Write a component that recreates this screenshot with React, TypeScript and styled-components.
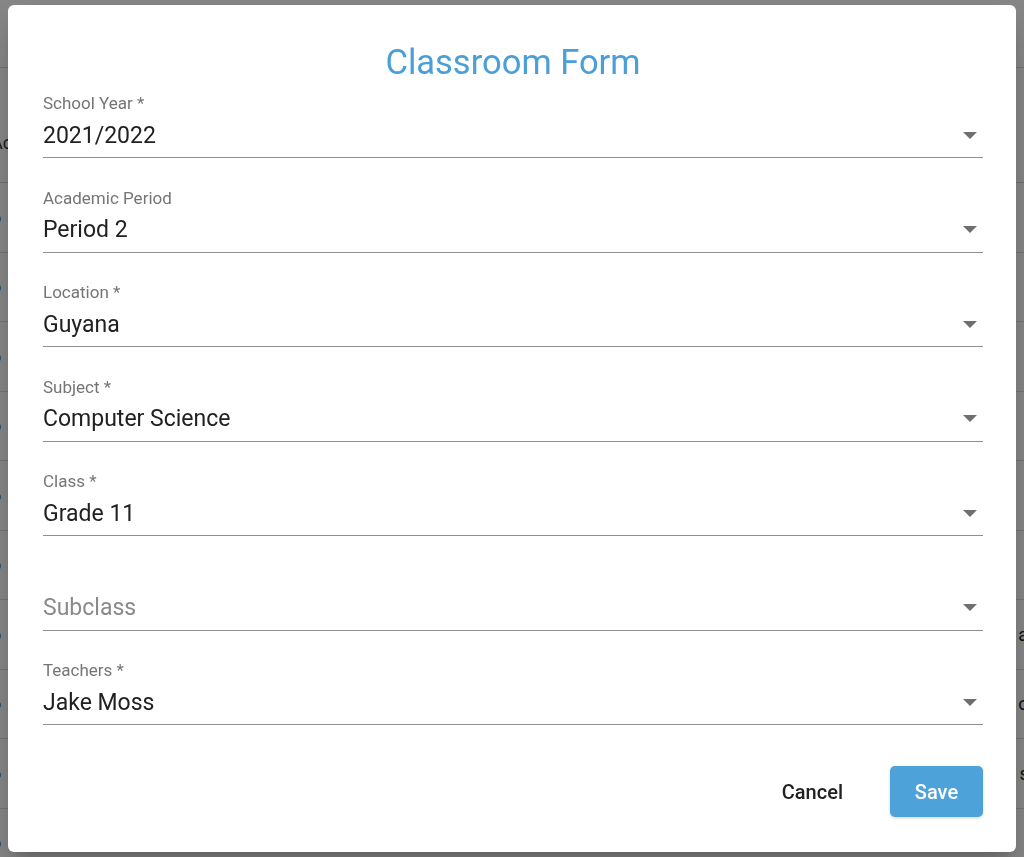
import styled, { createGlobalStyle } from "styled-components";

const GlobalStyle = createGlobalStyle`
   html, body {
       margin: 0;
       padding: 0;
       background: #ffffff;
       font-family: Roboto, "Noto Sans", "Liberation Sans", sans-serif;
       overflow: hidden;
   }
`;

const Page = styled.div`
   width: 1024px;
   height: 857px;
   position: relative;
   overflow: hidden;
   background: #ffffff;
`;

const TopBar = styled.div`
   height: 68px;
   border-bottom: 1px solid #d6d6d6;
   box-sizing: border-box;
`;

const Table = styled.div`
   margin-left: -9px;
   margin-right: -14px;
`;

const HeadRow = styled.div`
   height: 115px;
   display: flex;
   align-items: center;
   justify-content: space-between;
   border-bottom: 1px solid #d6d6d6;
   box-sizing: border-box;
   font-size: 18px;
   color: #333;
   padding-top: 34px;
`;

const Row = styled.div`
   height: 69.5px;
   display: flex;
   align-items: center;
   justify-content: space-between;
   border-bottom: 1px solid #dcdcdc;
   box-sizing: border-box;
   font-size: 18px;
   color: #222;
`;

const Backdrop = styled.div`
   position: fixed;
   inset: 0;
   background: rgba(0, 0, 0, 0.47);
`;

const Dialog = styled.div`
   position: absolute;
   left: 8px;
   top: 5px;
   width: 1008px;
   box-sizing: border-box;
   background: #ffffff;
   border-radius: 6px;
   padding: 36px 33px 35px 35px;
   box-shadow: 0 11px 15px -7px rgba(0,0,0,0.2), 0 24px 38px 3px rgba(0,0,0,0.14);
`;

const Title = styled.h2`
   margin: 0;
   text-align: center;
   font-size: 34.5px;
   line-height: 42px;
   font-weight: 400;
   color: #4a9fd8;
`;

const FieldList = styled.div`
   display: flex;
   flex-direction: column;
   gap: 29.5px;
   margin-top: 10px;
`;

const Field = styled.div`
   border-bottom: 1px solid #8f8f8f;
`;

const Label = styled.div`
   font-size: 17px;
   line-height: 20px;
   min-height: 20px;
   margin-bottom: 4px;
   color: #757575;
`;

const ValueRow = styled.div<{ $empty?: boolean }>`
   display: flex;
   align-items: center;
   justify-content: space-between;
   height: 36px;
   margin-bottom: 4px;
   font-size: 23px;
   color: ${(props) => (props.$empty ? "#8a8a8a" : "#212121")};
`;

const Arrow = styled.span`
   width: 0;
   height: 0;
   margin-right: 6px;
   border-left: 7px solid transparent;
   border-right: 7px solid transparent;
   border-top: 7px solid #6f6f6f;
`;

const Actions = styled.div`
   display: flex;
   justify-content: flex-end;
   align-items: center;
   margin-top: 41px;
`;

const CancelButton = styled.button`
   height: 51px;
   padding: 0 24px;
   margin-right: 23px;
   border: none;
   background: transparent;
   font-family: inherit;
   font-size: 20px;
   font-weight: 500;
   color: #212121;
`;

const SaveButton = styled.button`
   width: 93px;
   height: 51px;
   border: none;
   border-radius: 5px;
   background: #4da2d9;
   color: #ffffff;
   font-family: inherit;
   font-size: 20px;
   font-weight: 500;
   box-shadow: 0 1px 3px rgba(0,0,0,0.18);
`;

interface IField {
    label: string,
    value: string,
    placeholder?: boolean
}

const fields: IField[] = [
    { label: "School Year *", value: "2021/2022" },
    { label: "Academic Period", value: "Period 2" },
    { label: "Location *", value: "Guyana" },
    { label: "Subject *", value: "Computer Science" },
    { label: "Class *", value: "Grade 11" },
    { label: "", value: "Subclass", placeholder: true },
    { label: "Teachers *", value: "Jake Moss" },
];

const rightCells = ["", "", "", "", "", "", "an", "oc", "ss", ""];

function App() {
    return (
        <>
            <GlobalStyle />
            <Page>
                <TopBar />
                <Table>
                    <HeadRow>
                        <span>Ac</span>
                        <span></span>
                    </HeadRow>
                    {rightCells.map((r, i) => (
                        <Row key={i}>
                            <span>o</span>
                            <span>{r}</span>
                        </Row>
                    ))}
                </Table>
                <Backdrop />
                <Dialog>
                    <Title>Classroom Form</Title>
                    <FieldList>
                        {fields.map((f) => (
                            <Field key={f.value}>
                                <Label>{f.label}</Label>
                                <ValueRow $empty={f.placeholder}>
                                    <span>{f.value}</span>
                                    <Arrow />
                                </ValueRow>
                            </Field>
                        ))}
                    </FieldList>
                    <Actions>
                        <CancelButton>Cancel</CancelButton>
                        <SaveButton>Save</SaveButton>
                    </Actions>
                </Dialog>
            </Page>
        </>
    );
}
export default App;
